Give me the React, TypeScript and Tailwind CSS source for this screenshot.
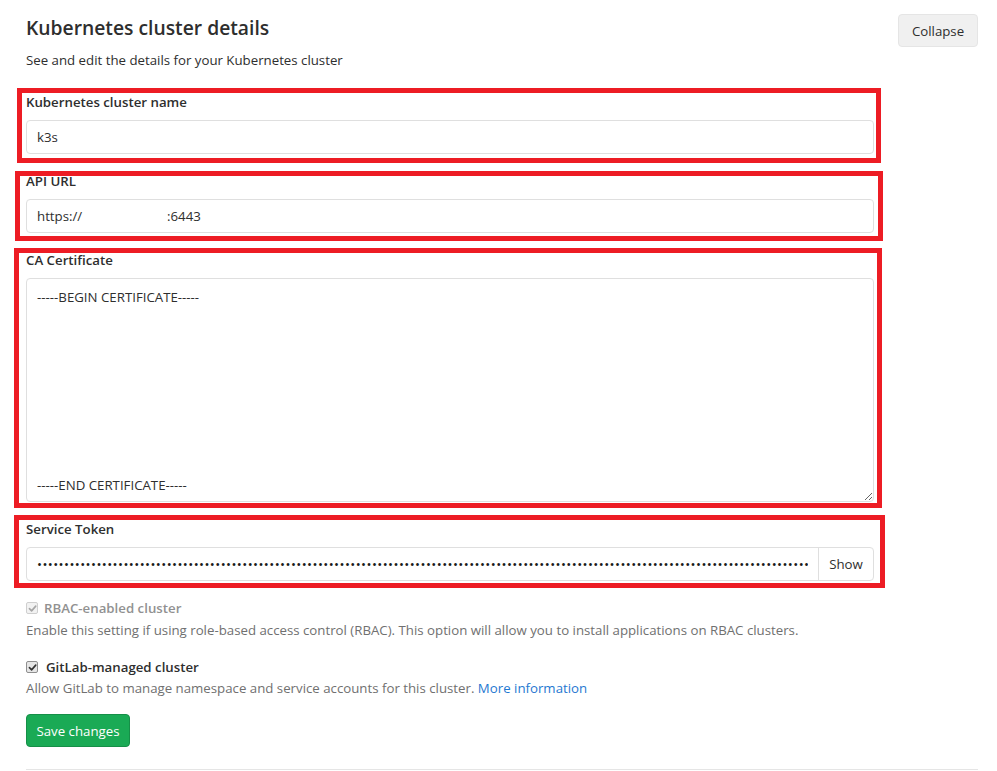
import React from "react";

const FONT = "font-['Open_Sans','Noto_Sans',sans-serif]";

function Mark({ className }: { className: string }) {
  // red annotation rectangle drawn over a form group
  return <span className={`pointer-events-none absolute border-[5px] border-[#ed1c24] ${className}`} />;
}

function Check({ disabled }: { disabled?: boolean }) {
  return (
    <span
      className={`inline-flex h-[12px] w-[12px] shrink-0 items-center justify-center rounded-[2px] border ${
        disabled ? "border-[#cfcfcf] bg-[#f2f2f2]" : "border-[#8f8f8f] bg-[#e6e6e6]"
      }`}
    >
      <svg viewBox="0 0 10 10" className="h-[9px] w-[9px]">
        <path
          d="M1.6 5.2 L4 7.6 L8.6 2.4"
          fill="none"
          stroke={disabled ? "#a6a6a6" : "#333"}
          strokeWidth="1.8"
          strokeLinecap="round"
          strokeLinejoin="round"
        />
      </svg>
    </span>
  );
}

const inputCls =
  "block h-[34px] w-full rounded-[4px] border border-[#dfdfdf] bg-white px-[10px] text-[13.25px] text-[#2e2e2e] outline-none";

export default function App() {
  const token = "x".repeat(320);
  return (
    <div className={`min-h-[771px] bg-white pl-[26px] pr-[19px] pt-[15px] text-[13.25px] leading-[20px] text-[#2e2e2e] ${FONT}`}>
      <div className="flex items-start justify-between">
        <div>
          <h4 className="text-[19.3px] font-semibold leading-[26px] text-[#2e2e2e]">Kubernetes cluster details</h4>
          <p className="mt-[9px]">See and edit the details for your Kubernetes cluster</p>
        </div>
        <button className="-mt-[1px] h-[33px] w-[80px] rounded-[4px] border border-[#e5e5e5] bg-[#f0f0f0] text-[13.25px] text-[#2e2e2e]">
          Collapse
        </button>
      </div>

      <div className="mt-[22px] flex w-[848px] flex-col gap-[17px]">
        <div className="relative">
          <label className="mb-[8px] block h-[20px] font-semibold">Kubernetes cluster name</label>
          <input className={inputCls} defaultValue="k3s" readOnly />
          <Mark className="-left-[9px] -top-[4px] -right-[7px] -bottom-[9px]" />
        </div>

        <div className="relative">
          <label className="mb-[8px] block h-[20px] font-semibold">API URL</label>
          <div className={`${inputCls} flex items-center`}>
            <span className="w-[130px] shrink-0 whitespace-nowrap">https://</span>
            <span>:6443</span>
          </div>
          <Mark className="-left-[11px] top-[0px] -right-[9px] -bottom-[8px]" />
        </div>

        <div className="relative">
          <label className="mb-[8px] block h-[20px] font-semibold">CA Certificate</label>
          <textarea
            readOnly
            className="block h-[224px] w-full rounded-[4px] border border-[#dfdfdf] bg-white px-[10px] pt-[8px] text-[13.25px] leading-[20.9px] text-[#2e2e2e] outline-none"
            defaultValue={"-----BEGIN CERTIFICATE-----" + "\n".repeat(9) + "-----END CERTIFICATE-----"}
          />
          <Mark className="-left-[12px] -top-[2px] -right-[8px] -bottom-[6px]" />
        </div>

        <div className="relative">
          <label className="mb-[8px] block h-[20px] font-semibold">Service Token</label>
          <div className="flex h-[34px] rounded-[4px] border border-[#dfdfdf] bg-white">
            <input
              type="password"
              readOnly
              defaultValue={token}
              className="min-w-0 flex-1 rounded-l-[4px] bg-transparent px-[10px] text-[13.25px] tracking-[0.42px] text-[#1a1a1a] outline-none"
            />
            <button className="w-[55px] border-l border-[#dfdfdf] text-[13.25px] text-[#2e2e2e]">Show</button>
          </div>
          <Mark className="-left-[12px] -top-[4px] -right-[11px] -bottom-[7px]" />
        </div>

        <div>
          <div className="flex h-[20px] items-center gap-[6px]">
            <Check disabled />
            <span className="font-semibold text-[#919191]">RBAC-enabled cluster</span>
          </div>
          <p className="mt-[2px] text-[#707070]">
            Enable this setting if using role-based access control (RBAC). This option will allow you to install
            applications on RBAC clusters.
          </p>
        </div>

        <div>
          <div className="flex h-[20px] items-center gap-[8px]">
            <Check />
            <span className="font-semibold text-[#2e2e2e]">GitLab-managed cluster</span>
          </div>
          <p className="mt-[1px] text-[#707070]">
            Allow GitLab to manage namespace and service accounts for this cluster.{" "}
            <a className="text-[#1f78d1]">More information</a>
          </p>
        </div>
      </div>

      <button className="mt-[16px] h-[33px] w-[104px] rounded-[4px] border border-[#168f48] bg-[#1aaa55] text-[13.25px] text-white">
        Save changes
      </button>
      <div className="mt-[22px] border-t border-[#e5e5e5]" />
    </div>
  );
}
